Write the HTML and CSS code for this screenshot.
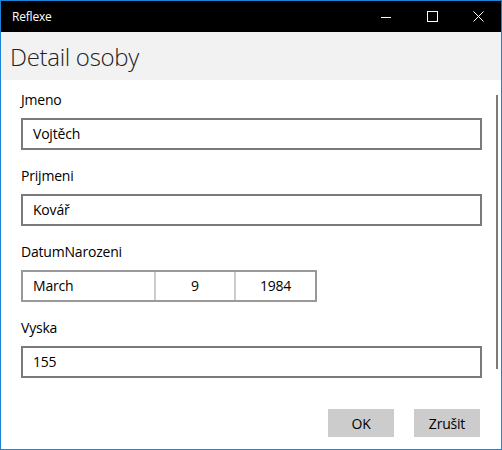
FILE: index.html
```html
<!DOCTYPE html>
<html>
<head>
<meta charset="utf-8">
<link rel="stylesheet" href="styles.css">
</head>
<body>
<div class="window">
  <div class="titlebar">
    <span class="app-title">Reflexe</span>
    <div class="controls">
      <span class="ctl"><svg width="10" height="10" viewBox="0 0 10 10"><line x1="0" y1="5.5" x2="10" y2="5.5" stroke="#fff" stroke-width="1"/></svg></span>
      <span class="ctl"><svg width="11" height="11" viewBox="0 0 11 11"><rect x="0.5" y="0.5" width="10" height="10" fill="none" stroke="#fff" stroke-width="1"/></svg></span>
      <span class="ctl"><svg width="11" height="11" viewBox="0 0 11 11"><path d="M0.5 0.5 L10.5 10.5 M10.5 0.5 L0.5 10.5" stroke="#fff" stroke-width="1"/></svg></span>
    </div>
  </div>
  <div class="header">Detail osoby</div>
  <div class="content">
    <div class="form">
      <div class="field">
        <div class="label">Jmeno</div>
        <div class="input">Vojtěch</div>
      </div>
      <div class="field">
        <div class="label">Prijmeni</div>
        <div class="input">Kovář</div>
      </div>
      <div class="field">
        <div class="label">DatumNarozeni</div>
        <div class="datepicker">
          <div class="dp-month">March</div>
          <div class="dp-day">9</div>
          <div class="dp-year">1984</div>
        </div>
      </div>
      <div class="field">
        <div class="label">Vyska</div>
        <div class="input">155</div>
      </div>
    </div>
    <div class="scrollbar"></div>
  </div>
  <div class="footer">
    <button class="btn">OK</button>
    <button class="btn">Zrušit</button>
  </div>
</div>
</body>
</html>
```
FILE: styles.css
```css
html, body {
  margin: 0;
  padding: 0;
  background: #fff;
}
body {
  font-family: "Open Sans", "Noto Sans", sans-serif;
  color: #000;
}
.window {
  box-sizing: border-box;
  width: 502px;
  height: 450px;
  border: 1px solid #1883d7;
  display: flex;
  flex-direction: column;
  overflow: hidden;
}
.titlebar {
  height: 31px;
  background: #000;
  color: #fff;
  display: flex;
  align-items: center;
  justify-content: space-between;
  flex: none;
}
.app-title {
  font-size: 12px;
  padding-left: 11px;
  letter-spacing: -0.2px;
}
.controls {
  display: flex;
  height: 100%;
}
.ctl {
  width: 46px;
  height: 100%;
  display: flex;
  align-items: center;
  justify-content: center;
}
.ctl svg { display: block; }
.header {
  flex: none;
  height: 48px;
  background: #f2f2f2;
  font-size: 24px;
  font-weight: 300;
  color: #222;
  padding-left: 9px;
  line-height: 50px;
  box-sizing: border-box;
  letter-spacing: -0.3px;
}
.content {
  flex: 1;
  position: relative;
}
.form {
  padding: 10px 19px 0 20px;
  display: flex;
  flex-direction: column;
  gap: 16px;
}
.field {
  display: flex;
  flex-direction: column;
  gap: 8px;
}
.label {
  font-size: 14px;
  line-height: 20px;
  letter-spacing: -0.2px;
}
.input {
  box-sizing: border-box;
  height: 32px;
  border: 2px solid #7a7a7a;
  padding: 0 10px;
  font-size: 14px;
  line-height: 28px;
  letter-spacing: -0.2px;
}
.datepicker {
  box-sizing: border-box;
  width: 296px;
  height: 32px;
  border: 2px solid #999;
  display: flex;
  font-size: 14px;
  line-height: 28px;
  letter-spacing: -0.2px;
}
.dp-month {
  width: 133px;
  padding-left: 10px;
  box-sizing: border-box;
  border-right: 2px solid #ccc;
}
.dp-day {
  width: 78px;
  text-align: center;
  border-right: 2px solid #ccc;
}
.dp-year {
  flex: 1;
  text-align: center;
}
.scrollbar {
  position: absolute;
  right: 3px;
  top: 15px;
  width: 2px;
  height: 274px;
  background: #7a7a7a;
}
.footer {
  flex: none;
  height: 71px;
  display: flex;
  justify-content: flex-end;
  gap: 20px;
  padding: 31px 21px 0 0;
  box-sizing: border-box;
  align-items: flex-start;
}
.btn {
  width: 66px;
  height: 28px;
  border: none;
  background: #ccc;
  font-family: "Open Sans", "Noto Sans", sans-serif;
  font-size: 14px;
  letter-spacing: -0.2px;
  color: #000;
  padding: 0;
}
```
